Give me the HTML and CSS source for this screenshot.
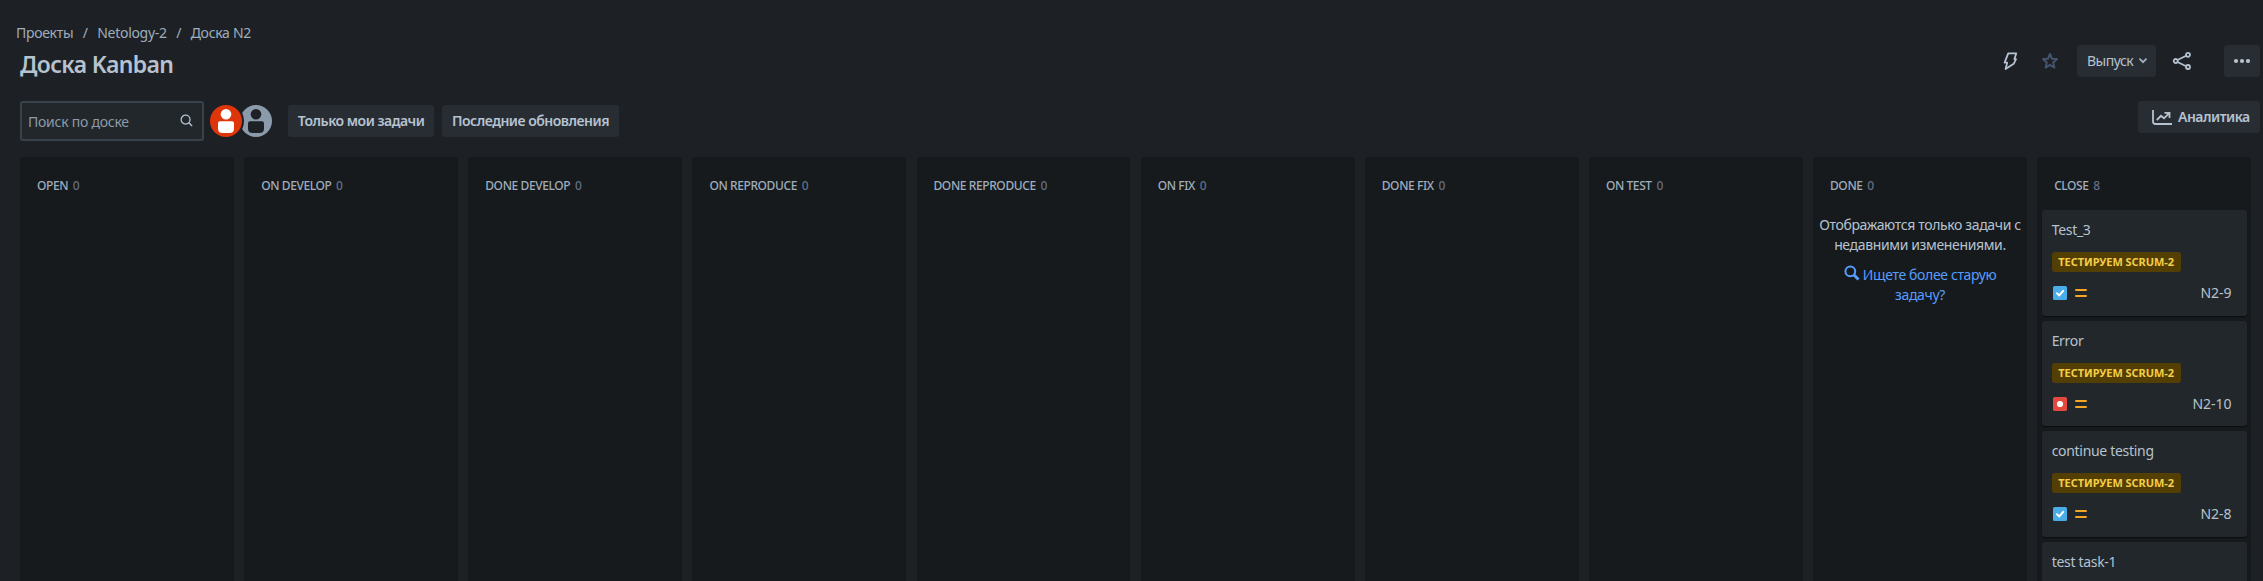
FILE: index.html
```html
<!DOCTYPE html>
<html lang="ru">
<head>
<meta charset="utf-8">
<title>Доска Kanban</title>
<link rel="stylesheet" href="styles.css">
</head>
<body>
<svg class="defs" width="0" height="0">
  <symbol id="task" viewBox="0 0 14 14"><rect width="14" height="14" rx="1.5" fill="#4bade8"/><path d="M4 7.3 6.2 9.4 10.2 4.8" fill="none" stroke="#fff" stroke-width="2" stroke-linecap="round"/></symbol>
  <symbol id="bug" viewBox="0 0 14 14"><rect width="14" height="14" rx="1.5" fill="#e2483d"/><circle cx="7" cy="7" r="3.1" fill="#fff"/></symbol>
  <symbol id="medium" viewBox="0 0 12 8"><path d="M1 1H11M1 7H11" stroke="#f5a623" stroke-width="2" stroke-linecap="round"/></symbol>
</svg>
<header class="header">
  <nav class="crumbs"><span class="crumb-root">Проекты</span><span class="slash">/</span><span>Netology-2</span><span class="slash">/</span><span>Доска N2</span></nav>
  <div class="title-row">
    <h1 class="title">Доска Kanban</h1>
    <div class="actions">
      <svg class="bolt" width="16" height="20" viewBox="0 0 16 20"><path d="M6.2 2.4H14.2L12.4 8.2H14L11.7 12.8 3.6 18 5.2 11.6H2.6Z" fill="none" stroke="#b6c2cf" stroke-width="1.8" stroke-linejoin="round"/></svg>
      <svg class="star" width="18" height="18" viewBox="0 0 18 18"><path d="M9 2 11 6.7 16 7.1 12.2 10.4 13.4 15.6 9 12.9 4.6 15.6 5.8 10.4 2 7.1 7 6.7Z" fill="none" stroke="#44546f" stroke-width="2" stroke-linejoin="round"/></svg>
      <button class="btn release">Выпуск<svg width="8" height="6" viewBox="0 0 8 6"><path d="M1 1.2 4 4.2 7 1.2" fill="none" stroke="#9fadbc" stroke-width="1.9" stroke-linecap="round"/></svg></button>
      <svg class="share" width="20" height="20" viewBox="0 0 20 20"><g fill="none" stroke="#b6c2cf" stroke-width="1.8"><circle cx="3.7" cy="10" r="2"/><circle cx="16" cy="3.8" r="2"/><circle cx="16" cy="16" r="2"/><path d="M5.5 9 14.2 4.7M5.5 11 14.2 15.2"/></g></svg>
      <button class="btn more"><svg width="18" height="6" viewBox="0 0 18 6" fill="#b6c2cf"><circle cx="3" cy="3" r="2.1"/><circle cx="9" cy="3" r="2.1"/><circle cx="15" cy="3" r="2.1"/></svg></button>
    </div>
  </div>
</header>
<div class="toolbar">
  <div class="search"><span>Поиск по доске</span><svg width="13" height="13" viewBox="0 0 14 14"><circle cx="6" cy="6" r="4.8" fill="none" stroke="#b6c2cf" stroke-width="1.4"/><path d="M9.5 9.5 13 13" stroke="#b6c2cf" stroke-width="1.5"/></svg></div>
  <div class="people">
    <svg class="person person-front" width="36" height="36" viewBox="0 0 36 36"><circle cx="18" cy="18" r="18" fill="#1d2125"/><circle cx="18" cy="18" r="16" fill="#de350b"/><g fill="#fff"><circle cx="18" cy="11.3" r="5.3"/><path d="M12 18.3H24Q26 18.3 26 20.3V25.5Q26 30 21.5 30H14.5Q10 30 10 25.5V20.3Q10 18.3 12 18.3Z"/></g></svg>
    <svg class="person" width="36" height="36" viewBox="0 0 36 36"><circle cx="18" cy="18" r="18" fill="#1d2125"/><circle cx="18" cy="18" r="16" fill="#8c9bab"/><g fill="#1d2125"><circle cx="18" cy="11.3" r="5.3"/><path d="M12 18.3H24Q26 18.3 26 20.3V25.5Q26 30 21.5 30H14.5Q10 30 10 25.5V20.3Q10 18.3 12 18.3Z"/></g></svg>
  </div>
  <button class="btn filter mine">Только мои задачи</button>
  <button class="btn filter recent">Последние обновления</button>
  <button class="btn analytics"><svg width="20" height="15" viewBox="0 0 20 15" fill="none" stroke="#b6c2cf" stroke-width="1.8"><path d="M1 0V11.5Q1 14 3.5 14H20M4.8 10 9 5.8 12 8.3 16.7 3.6M12.5 2.9H17.5V7.9"/></svg>Аналитика</button>
</div>
<main class="board">
  <section class="column"><h2 class="name">OPEN <span class="count">0</span></h2></section>
  <section class="column"><h2 class="name">ON DEVELOP <span class="count">0</span></h2></section>
  <section class="column"><h2 class="name">DONE DEVELOP <span class="count">0</span></h2></section>
  <section class="column"><h2 class="name">ON REPRODUCE <span class="count">0</span></h2></section>
  <section class="column"><h2 class="name">DONE REPRODUCE <span class="count">0</span></h2></section>
  <section class="column"><h2 class="name">ON FIX <span class="count">0</span></h2></section>
  <section class="column"><h2 class="name">DONE FIX <span class="count">0</span></h2></section>
  <section class="column"><h2 class="name">ON TEST <span class="count">0</span></h2></section>
  <section class="column"><h2 class="name">DONE <span class="count">0</span></h2>
    <div class="notice"><p>Отображаются только задачи с<br>недавними изменениями.</p>
    <a class="older"><svg width="16" height="16" viewBox="0 0 16 16" fill="none" stroke="#579dff"><circle cx="6.3" cy="6.3" r="4.9" stroke-width="2"/><path d="M10 10 14.5 14.5" stroke-width="3"/></svg> Ищете более старую<br>задачу?</a></div>
  </section>
  <section class="column"><h2 class="name">CLOSE <span class="count">8</span></h2>
    <div class="cards">
      <article class="card"><div class="summary">Test_3</div><span class="epic">ТЕСТИРУЕМ SCRUM-2</span><div class="meta"><svg width="14" height="14"><use href="#task"/></svg><svg width="12" height="8"><use href="#medium"/></svg><span class="key">N2-9</span></div></article>
      <article class="card"><div class="summary">Error</div><span class="epic">ТЕСТИРУЕМ SCRUM-2</span><div class="meta"><svg width="14" height="14"><use href="#bug"/></svg><svg width="12" height="8"><use href="#medium"/></svg><span class="key">N2-10</span></div></article>
      <article class="card"><div class="summary">continue testing</div><span class="epic">ТЕСТИРУЕМ SCRUM-2</span><div class="meta"><svg width="14" height="14"><use href="#task"/></svg><svg width="12" height="8"><use href="#medium"/></svg><span class="key">N2-8</span></div></article>
      <article class="card card-cut"><div class="summary">test task-1</div></article>
    </div>
  </section>
</main>
</body>
</html>
```
FILE: styles.css
```css
* { box-sizing: border-box; }
body {
  margin: 0;
  height: 581px;
  overflow: hidden;
  display: flex;
  flex-direction: column;
  background: #1d2125;
  color: #b6c2cf;
  font: 14px/20px "Noto Sans", "Open Sans", sans-serif;
}
svg { display: block; flex: none; }
.defs { position: absolute; }
.header { padding: 23px 3px 0 16px; height: 93px; flex: none; }
.crumbs { display: flex; color: #9fadbc; height: 20px; white-space: nowrap; letter-spacing: -.3px; }
.slash { width: 24px; text-align: center; }
.title-row { display: flex; justify-content: space-between; height: 36px; padding-left: 4px; }
.title { margin: 5px 0 0; font-size: 23px; line-height: 32px; font-weight: 600; letter-spacing: -.65px; white-space: nowrap; }
.actions { display: flex; align-items: center; height: 36px; }
.bolt { margin-right: 23px; }
.star { margin-right: 18px; }
.share { margin: 0 32px 0 16px; }
.btn {
  display: flex;
  align-items: center;
  height: 32px;
  margin: 0;
  padding: 0 10px;
  border: 0;
  border-radius: 3px;
  background: #282d33;
  color: #b6c2cf;
  font: 600 14px/20px "Noto Sans", "Open Sans", sans-serif;
  letter-spacing: -.5px;
  white-space: nowrap;
}
.release { width: 79px; font-weight: 400; justify-content: space-between; padding-right: 9px; }
.more { width: 36px; padding: 0 9px; }
.toolbar { display: flex; height: 64px; flex: none; padding: 8px 3px 0 20px; }
.search {
  display: flex;
  align-items: center;
  justify-content: space-between;
  width: 184px;
  height: 40px;
  padding: 2px 9px 0 6px;
  border: 2px solid #39424a;
  border-radius: 3px;
  background: #22272b;
  color: #8c9bab;
  letter-spacing: -.25px;
}
.search svg { margin-top: -4px; }
.people { display: flex; margin: 2px 14px 0 4px; }
.person + .person { margin-left: -6px; }
.person-front { position: relative; z-index: 1; }
.filter { margin-top: 4px; justify-content: center; padding: 0; }
.mine { width: 146px; margin-right: 8px; }
.recent { width: 177px; }
.analytics { width: 122px; margin-left: auto; padding: 0 0 0 14px; gap: 6px; }
.board { display: flex; gap: 10.2px; flex: 1; padding: 0 12px 0 20px; min-height: 0; overflow: hidden; }
.column { flex: 1 1 0; min-width: 0; border-radius: 3px 3px 0 0; background: #161a1d; }
.name { margin: 0; padding: 20px 0 0 17px; height: 53px; font-size: 12px; line-height: 18px; font-weight: 500; color: #9fadbc; letter-spacing: -.4px; white-space: nowrap; }
.count { margin-left: 2px; color: #626f86; }
.notice { padding-top: 5px; text-align: center; white-space: nowrap; letter-spacing: -.36px; }
.notice p { margin: 0 0 10px; }
.older { color: #579dff; }
.older svg { display: inline-block; vertical-align: -1px; }
.cards { padding: 0 4.5px; display: flex; flex-direction: column; gap: 5px; }
.card { height: 105.7px; padding: 10px 15px 0 10px; border-radius: 3px; background: #22272b; box-shadow: 0 1px 1px #0b0e10; flex: none; }
.card-cut { height: 39px; border-radius: 3px 3px 0 0; box-shadow: none; }
.card-cut .summary { height: 20px; }
.summary { height: 32px; letter-spacing: -.3px; }
.epic { display: flex; align-items: center; justify-content: center; width: 129px; height: 20px; border-radius: 3px; background: #533f04; color: #f5cd47; font-size: 11px; font-weight: 700; letter-spacing: -.05px; white-space: nowrap; }
.meta { display: flex; align-items: center; height: 20px; margin-top: 11px; padding-left: 1px; gap: 8px; }
.key { margin-left: auto; }
```
